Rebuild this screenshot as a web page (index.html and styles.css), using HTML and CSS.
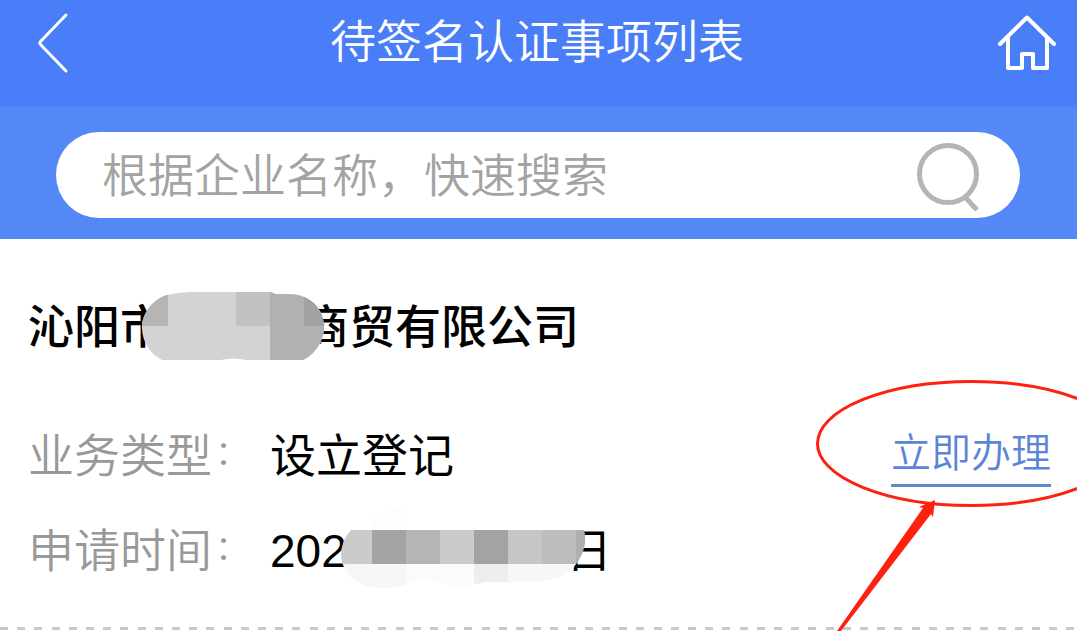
FILE: index.html
```html
<!DOCTYPE html>
<html lang="zh-CN">

<head>
  <meta charset="utf-8">
  <title>待签名认证事项列表</title>
  <link rel="stylesheet" href="styles.css">
</head>

<body>
  <div class="page">
    <header class="header">
      <svg class="back" viewBox="0 0 34 62" width="34" height="62">
        <path d="M31 3L5.500 29.500Q4 31 5.500 32.500L31 59" />
      </svg>
      <h1>待签名认证事项列表</h1>
      <svg class="home" viewBox="0 0 60 60" width="60" height="60">
        <path d="M3 32L30 5.500L57 32M11 26V56H25V42H36V56H50V26" />
      </svg>
    </header>

    <div class="search-bar">
      <div class="search-box">
        <span class="placeholder">根据企业名称，快速搜索</span>
        <svg class="search-icon" viewBox="0 0 66 72" width="66" height="72">
          <circle cx="33" cy="35" r="28.500" />
          <path d="M50 58L62 71" />
        </svg>
      </div>
    </div>

    <main class="item">
      <h2 class="company">
        <span>沁阳市</span>
        <span>商贸有限公司</span>
        <svg class="mosaic mosaic-name" viewBox="0 0 184 70" width="184" height="70">
          <clipPath id="name-shape">
            <path d="M1 33C3 20 14 7 26 4Q38 1 51 1H130L134 3H148C169 3 183 18 183 36C183 51 173 64 162 69H105Q93 66 80 69H21C8 62 0 49 1 33Z" />
          </clipPath>
          <g clip-path="url(#name-shape)">
            <path fill="#d3d3d3" d="M0 0H184V70H0Z" />
            <path fill="#b5b5b5" d="M0 0H27V35H0Z" />
            <path fill="#c2c2c2" d="M95 0H129V35H95Z" />
            <path fill="#b1b1b1" d="M129 0H184V70H129Z" />
            <path fill="#a2a2a2" d="M163 0H184V35H163Z" />
          </g>
        </svg>
      </h2>

      <div class="row">
        <span class="label">业务类型<span class="colon">：</span></span>
        <span class="value">设立登记</span>
        <a class="handle" href="#">立即办理</a>
      </div>

      <div class="row">
        <span class="label">申请时间<span class="colon">：</span></span>
        <span class="value date"><span>202</span><span>日</span></span>
        <svg class="mosaic mosaic-date" viewBox="0 0 246 84" width="246" height="84">
          <clipPath id="date-shape">
            <path d="M10 25H243C247 39 241 54 230 65C218 76 205 74 195 77H145C120 82 106 82 90 73C76 72 67 83 40 83C16 83 1 68 0 50Q0 36 10 25Z" />
          </clipPath>
          <path fill="#fdfdfd" d="M31 12Q46 3 65 0V26H31Z" />
          <g clip-path="url(#date-shape)">
            <path fill="#f7f7f7" d="M0 59H246V84H0Z" />
            <path fill="#fbfbfb" d="M65 59H133V84H65Z" />
            <path fill="#eeeeee" d="M133 59H167V84H133Z" />
            <path fill="#cbcbcb" d="M0 25H31V59H0Z" />
            <path fill="#a4a4a4" d="M31 25H65V59H31Z" />
            <path fill="#b5b5b5" d="M65 25H99V59H65Z" />
            <path fill="#cbcbcb" d="M99 25H133V59H99Z" />
            <path fill="#a3a3a3" d="M133 25H167V59H133Z" />
            <path fill="#c6c6c6" d="M167 25H201V59H167Z" />
            <path fill="#bdbdbd" d="M201 25H235V59H201Z" />
            <path fill="#b0b0b0" d="M235 25H246V59H235Z" />
          </g>
        </svg>
      </div>
    </main>

    <div class="divider"></div>

    <!-- red circle and arrow pointing at the link -->
    <svg class="marker" viewBox="0 0 277 261" width="277" height="261">
      <ellipse cx="171.500" cy="73.500" rx="154" ry="62" />
      <path d="M37 261L123 138L119 137L135 130L133 147L131 144L41 261Z" />
    </svg>
  </div>
</body>

</html>
```

FILE: styles.css
```css
* {
  box-sizing: border-box;
}

body {
  margin: 0;
  font-family: "Noto Sans CJK SC", sans-serif;
  font-size: 46px;
  background-color: #fff;
}

h1,
h2 {
  margin: 0;
  font-size: 46px;
}

.page {
  position: relative;
  height: 631px;
  overflow: hidden;
}

.header {
  display: flex;
  justify-content: space-between;
  height: 107px;
  padding: 12px 20px 0 35px;
  background-color: #4a7ef9;
}

.header h1 {
  padding-left: 8px;
  font-weight: 350;
  line-height: 52px;
  color: #fff;
}

.header svg {
  fill: none;
  stroke: #fff;
  stroke-width: 3;
  stroke-linecap: round;
}

.header .home {
  stroke-width: 4;
  stroke-linejoin: round;
}

.search-bar {
  height: 132px;
  padding: 25px 57px 0 56px;
  background-color: #5588f7;
}

.search-box {
  display: flex;
  justify-content: space-between;
  height: 86px;
  padding: 7px 39px 0 46px;
  border-radius: 43px;
  background-color: #fff;
}

.placeholder {
  font-weight: 350;
  line-height: 67px;
  color: #a3a3a3;
}

.search-icon {
  fill: none;
  stroke: #b5b5b5;
  stroke-width: 5;
}

.item {
  padding: 55px 25px 0 28px;
}

.company {
  position: relative;
  display: flex;
  gap: 137px;
  height: 66px;
  margin-bottom: 48px;
  font-weight: 500;
  line-height: 58px;
  color: #000;
}

.row {
  position: relative;
  display: flex;
  height: 95px;
  line-height: 88px;
}

.label {
  width: 242px;
  font-weight: 350;
  color: #999;
}

.colon {
  margin-left: 3px;
  vertical-align: 7px;
  font-size: 34px;
  line-height: 1;
}

.value {
  color: #000;
}

.date {
  display: flex;
  gap: 219px;
  padding-top: 4px;
  font-family: "Liberation Sans", "Noto Sans CJK SC", sans-serif;
}

.handle {
  height: 64px;
  margin-top: 15px;
  margin-left: auto;
  margin-right: 1px;
  border-bottom: 3px solid #6089cb;
  font-size: 40px;
  font-weight: 350;
  line-height: 55px;
  color: #5d85d7;
  text-decoration: none;
}

.mosaic {
  position: absolute;
}

.mosaic-name {
  top: -3px;
  left: 113px;
}

.mosaic-date {
  top: 2px;
  left: 313px;
}

.divider {
  height: 3px;
  margin-top: 29px;
  background: repeating-linear-gradient(90deg, #c8c8c8 0 8px, #fff 8px 17.2px);
}

.marker {
  position: absolute;
  top: 370px;
  left: 800px;
}

.marker ellipse {
  fill: none;
  stroke: #ff2010;
  stroke-width: 3;
}

.marker path {
  fill: #ff2010;
}
```
